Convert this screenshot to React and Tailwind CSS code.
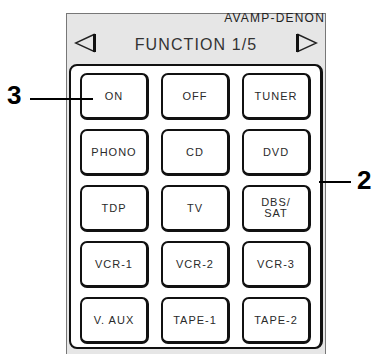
const rows = [
  ["ON", "OFF", "TUNER"],
  ["PHONO", "CD", "DVD"],
  ["TDP", "TV", "DBS/SAT"],
  ["VCR-1", "VCR-2", "VCR-3"],
  ["V. AUX", "TAPE-1", "TAPE-2"],
];

function Arrow({ dir }) {
  const flip = dir === "right";
  return (
    <svg width="23" height="20" viewBox="0 0 23 20" className={flip ? "-scale-x-100" : ""}>
      <polygon points="20,1.5 1.5,10 20,18.5" fill="none" stroke="#222" strokeWidth="1.4" strokeLinejoin="miter" />
      <line x1="20.5" y1="1" x2="20.5" y2="19" stroke="#111" strokeWidth="3" />
    </svg>
  );
}

function Key({ label }) {
  const parts = label === "DBS/SAT" ? ["DBS/", "SAT"] : [label];
  return (
    <div className="h-[47px] flex flex-col items-center justify-center rounded-[7px] border-2 border-r-[3px] border-b-[3px] border-[#111] bg-white text-[11px] leading-[11px] tracking-[1px] text-[#2a2a2a]">
      {parts.map((p) => (
        <span key={p}>{p}</span>
      ))}
    </div>
  );
}

export default function App() {
  return (
    <div className="relative w-[381px] h-[354px] overflow-hidden bg-white pt-[13px] font-['Liberation_Sans',Arial,sans-serif]">
      <div className="ml-[66px] w-[260px] h-[345px] border border-[#777] bg-[#e6e6e6] flex flex-col">
        <div className="h-[10px] -mt-[2px] text-right text-[12px] leading-[12px] tracking-[1.2px] text-[#222]">
          AVAMP-DENON
        </div>
        <div className="h-[42px] flex items-center justify-between px-[7px]">
          <Arrow dir="left" />
          <span className="mt-[3px] text-[16px] leading-none tracking-[1.1px] text-[#333]">FUNCTION 1/5</span>
          <Arrow dir="right" />
        </div>
        <div className="ml-[2px] w-[254px] rounded-[8px] border-2 border-r-[3px] border-[#111] bg-white pt-[7px] pb-[3px]">
          <div className="grid grid-cols-[69px_69px_69px] gap-x-[12px] gap-y-[9px] justify-center">
            {rows.flat().map((l) => (
              <Key key={l} label={l} />
            ))}
          </div>
        </div>
      </div>

      <span className="absolute left-[7px] top-[82px] text-[26px] font-bold leading-none text-black">3</span>
      <div className="absolute left-[30px] top-[98px] w-[63px] h-[2px] bg-black" />

      <div className="absolute left-[319px] top-[181px] w-[32px] h-[2px] bg-black" />
      <span className="absolute left-[357px] top-[167px] text-[26px] font-bold leading-none text-black">2</span>
    </div>
  );
}
